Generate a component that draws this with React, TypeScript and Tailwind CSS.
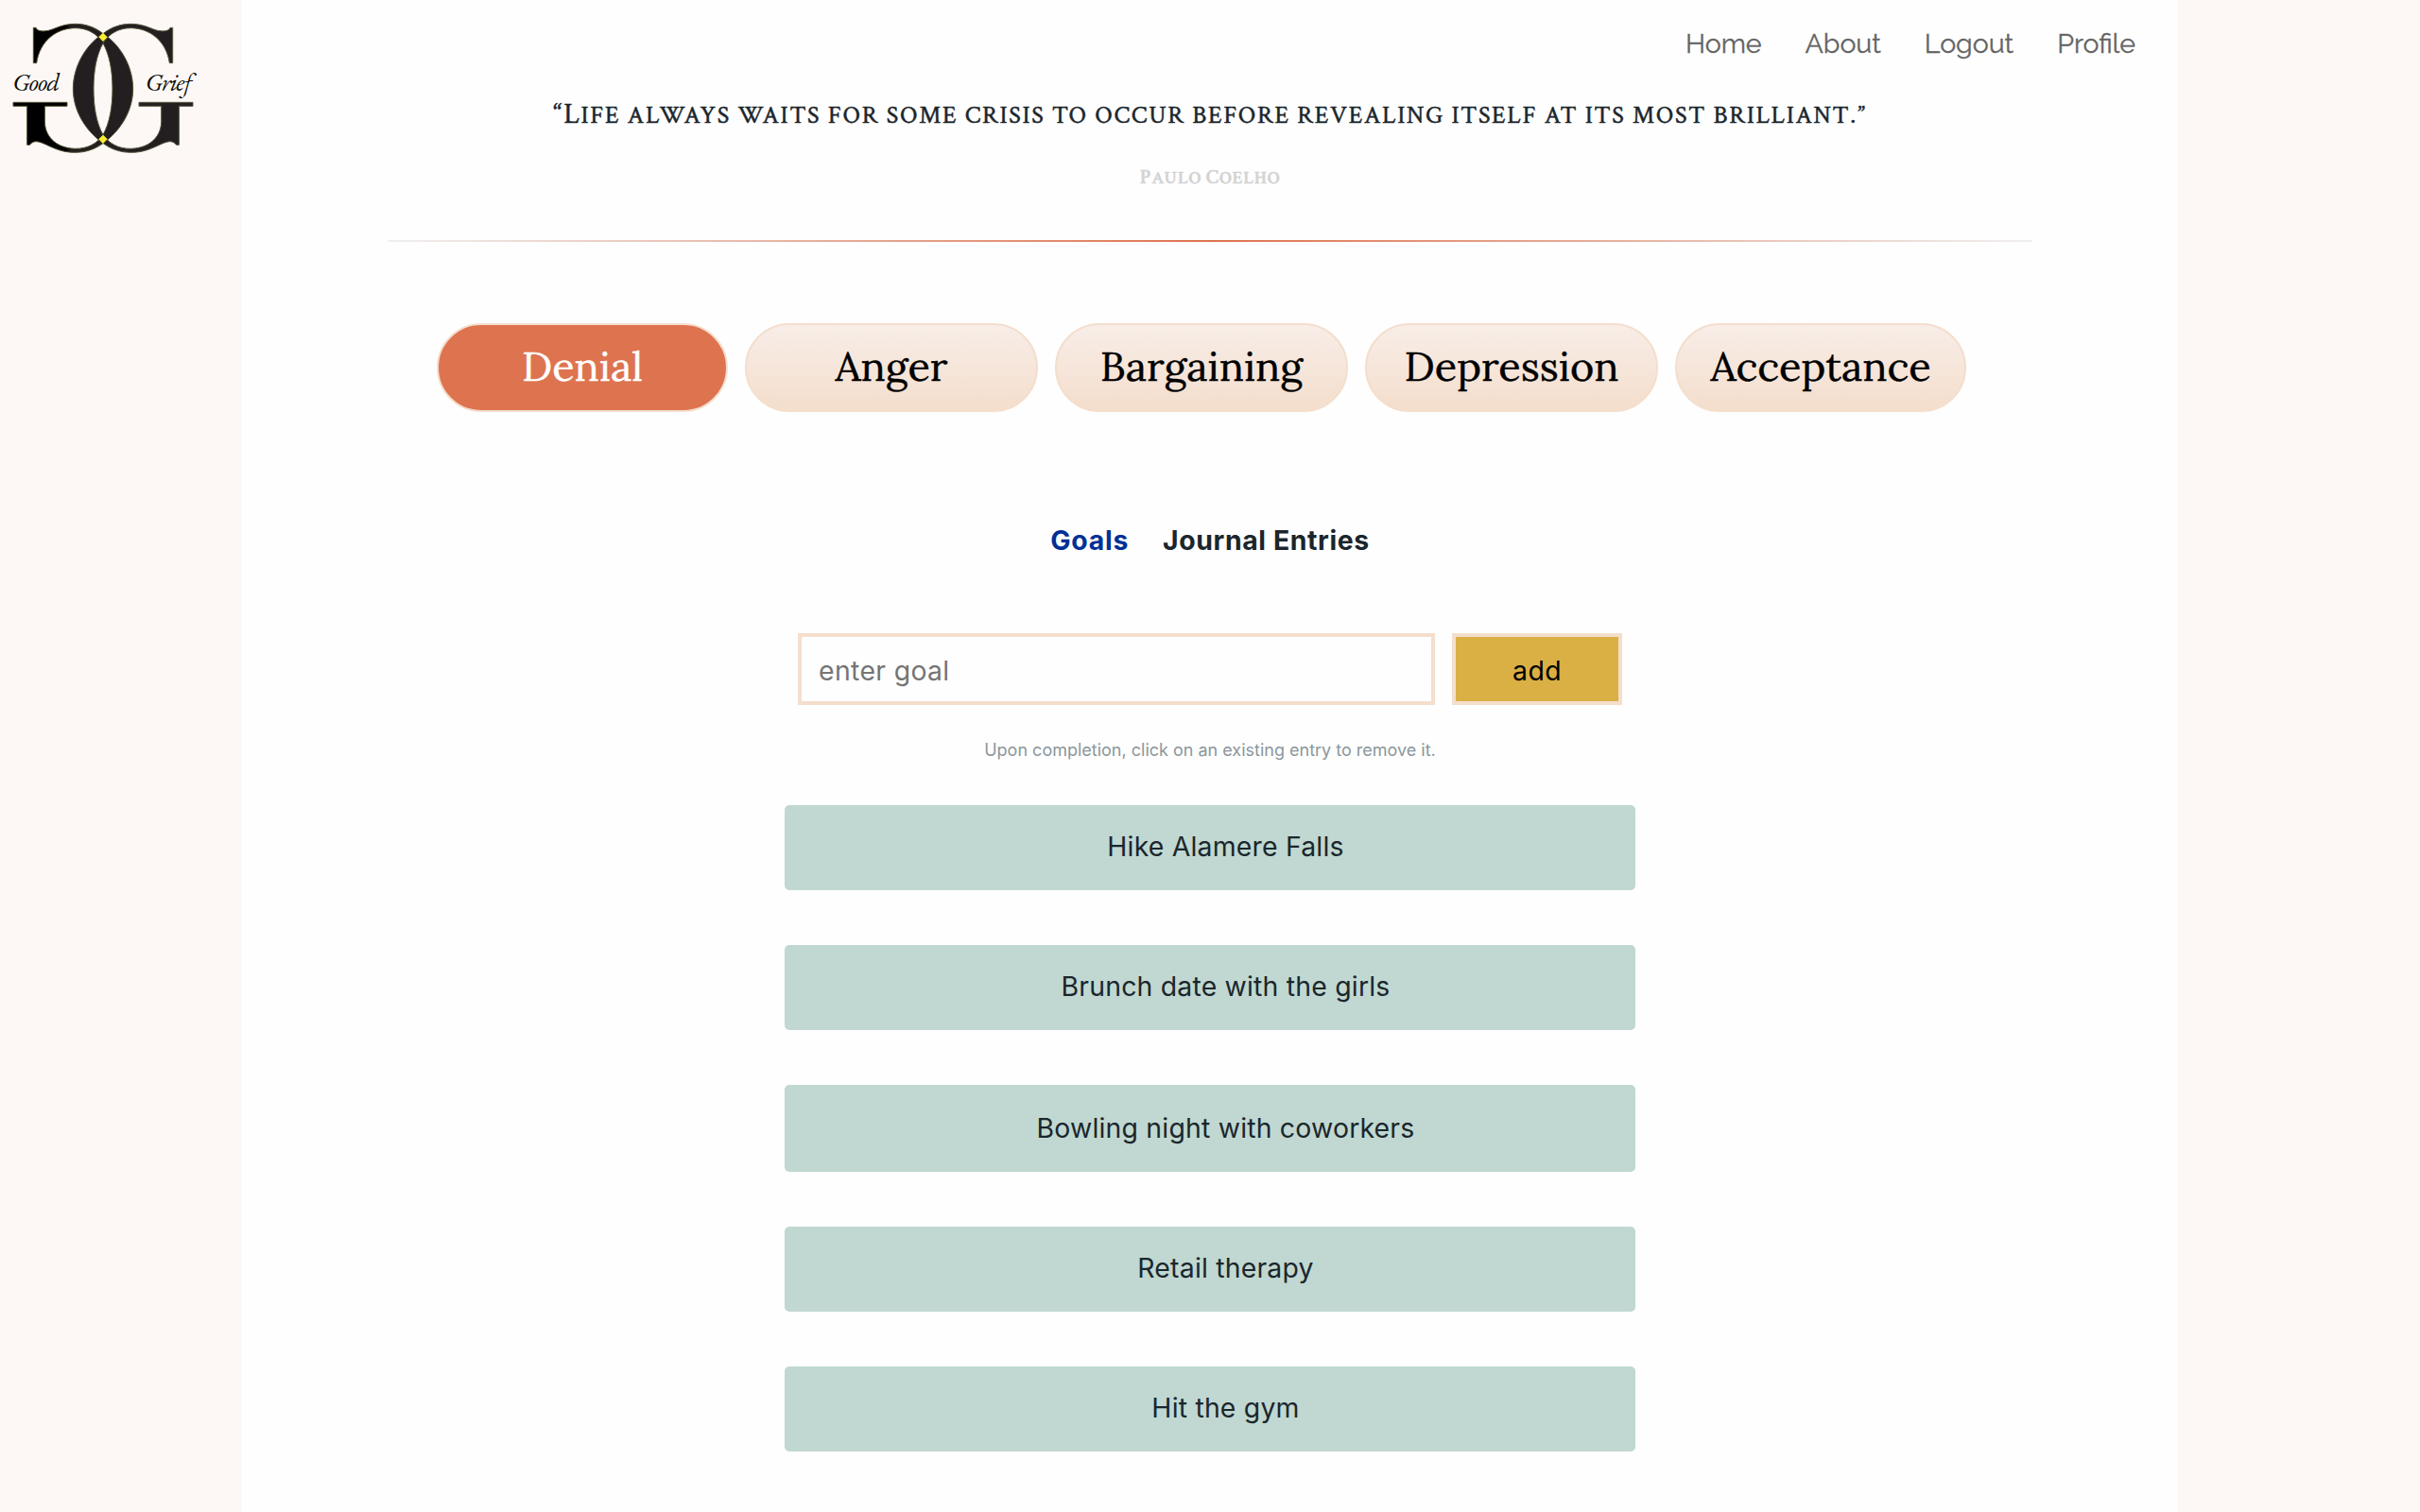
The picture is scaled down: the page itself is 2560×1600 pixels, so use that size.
import React from "react";

const navItems = ["Home", "About", "Logout", "Profile"];
const stages = [
  { name: "Denial", look: "w-[308px] bg-[#de734f] text-white" },
  { name: "Anger", look: "w-[310px] bg-linear-to-b from-[#f8ede8] to-[#f4decc]" },
  { name: "Bargaining", look: "w-[310px] bg-linear-to-b from-[#f8ede8] to-[#f4decc]" },
  { name: "Depression", look: "w-[310px] bg-linear-to-b from-[#f8ede8] to-[#f4decc]" },
  { name: "Acceptance", look: "w-[308px] bg-linear-to-b from-[#f8ede8] to-[#f4decc]" },
];
const goals = [
  { text: "Hike Alamere Falls", box: "h-[90px] pb-[2px]" },
  { text: "Brunch date with the girls", box: "h-[90px] pb-[2px]" },
  { text: "Bowling night with coworkers", box: "h-[92px]" },
  { text: "Retail therapy", box: "h-[90px] pb-[2px]" },
  { text: "Hit the gym", box: "h-[90px] pb-[2px]" },
];

// One half of the monogram; the other half is its mirror image.
const LETTER_G =
  "M548 88 V200 H538 C528 130 475 89 415 89 C375 89 345 108 327 137 C306 175 297 225 297 282 C297 340 306 390 327 428 C345 455 375 472 415 472 C480 470 512 430 512 385 V337 H441 V325 H612 V337 H568 V460 H560 C545 442 530 450 510 458 C480 472 455 484 415 484 C385 484 355 475 330 457 C270 415 232 350 232 282 C232 215 268 145 328 106 C355 85 385 76 415 76 C455 76 480 92 500 97 C520 100 535 100 540 88 Z";

function Logo() {
  return (
    <svg viewBox="0 0 660 510" className="block h-[170px] w-[220px]">
      <defs>
        <linearGradient id="ink" gradientUnits="userSpaceOnUse" x1="428" y1="0" x2="446" y2="0">
          <stop offset="0" stopColor="#231f20" />
          <stop offset="1" stopColor="#000000" />
        </linearGradient>
      </defs>
      <path d={LETTER_G} transform="translate(654 0) scale(-1 1)" fill="url(#ink)" stroke="#4e4d2c" strokeWidth="3" />
      <path d={LETTER_G} fill="#231f20" stroke="#55553c" strokeWidth="3" />
      <path d="M327 104 L341 118 L327 132 L313 118 Z M327 428 L341 442 L327 456 L313 442 Z" fill="#f9ed32" />
      <g fill="#0b0b08" fontSize="80" fontStyle="italic" fontFamily="'EB Garamond', 'Liberation Serif', serif">
        <text x="40" y="287" textLength="150">Good</text>
        <text x="461" y="287" textLength="148">Grief</text>
      </g>
    </svg>
  );
}

export default function App() {
  return (
    <div className="flex h-[1600px] w-[2560px] overflow-hidden bg-[#fdf8f5] font-['Inter','Liberation_Sans',sans-serif] text-[#1b262c]">
      <aside className="w-64 shrink-0">
        <Logo />
      </aside>
      <main className="flex w-[2048px] shrink-0 flex-col items-center bg-[#fefefe]">
        <nav className="flex w-full justify-end gap-[46px] pr-[45px] font-['Raleway','Lato',sans-serif] text-[28.5px] leading-[92px] text-[#646464] [-webkit-text-stroke:0.3px]">
          {navItems.map((item) => (
            <a key={item} href="#">{item}</a>
          ))}
        </nav>
        <blockquote className="flex flex-col items-center font-['Crimson_Text','Liberation_Serif',serif] uppercase [-webkit-text-stroke:0.5px]">
          <p className="h-[68px] text-[26px] leading-[60px] tracking-[1.72px] first-letter:text-[30px]">
            “Life always waits for some crisis to occur before revealing itself at its most brilliant.”
          </p>
          <cite className="h-[94px] text-[19px] font-semibold not-italic leading-[56px] tracking-[0.75px] text-[#d3d3d3]">
            <span className="text-[21.5px]">P</span>aulo <span className="text-[21.5px]">C</span>oelho
          </cite>
        </blockquote>
        <div className="h-[2px] w-[85%] bg-[linear-gradient(to_right,#f0f0f0,#de734f,#f0f0f0)]" />
        <div className="-ml-[18px] mt-[86px] flex h-[94px] gap-[18px] font-['Lora','Liberation_Serif',serif] text-[43.2px] text-black [-webkit-text-stroke:0.4px]">
          {stages.map((stage) => (
            <button
              key={stage.name}
              className={`${stage.look} h-full rounded-full border-2 border-[#f4decc] pb-[2px]`}
            >
              {stage.name}
            </button>
          ))}
        </div>
        <div className="mt-[100px] flex h-[72px] gap-9 text-[28.4px] font-bold leading-[72px]">
          <a href="#" className="tracking-[0.75px] text-[#003096]">Goals</a>
          <a href="#" className="tracking-[0.6px]">Journal Entries</a>
        </div>
        <form className="mt-[62px] flex h-[76px] gap-[18px] text-[28.4px] tracking-[0.35px]">
          <input
            placeholder="enter goal"
            className="w-[674px] border-4 border-[#f4decc] bg-transparent px-[18px] pt-[4px] placeholder:text-[#757575] placeholder:opacity-100"
          />
          <button type="button" className="w-[180px] border-4 border-[#f4decc] bg-[#dab045] pt-[4px] text-black">
            add
          </button>
        </form>
        <p className="mt-[30px] h-[76px] text-[18px] leading-[36px] text-[#8b979c]">
          Upon completion, click on an existing entry to remove it.
        </p>
        <ul className="flex w-[900px] flex-col gap-[58px] text-[28.4px] tracking-[0.2px]">
          {goals.map((goal) => (
            <li key={goal.text} className={`${goal.box} flex items-center justify-center rounded-[5px] bg-[#c0d8d1] pl-[33px]`}>
              {goal.text}
            </li>
          ))}
        </ul>
      </main>
    </div>
  );
}
